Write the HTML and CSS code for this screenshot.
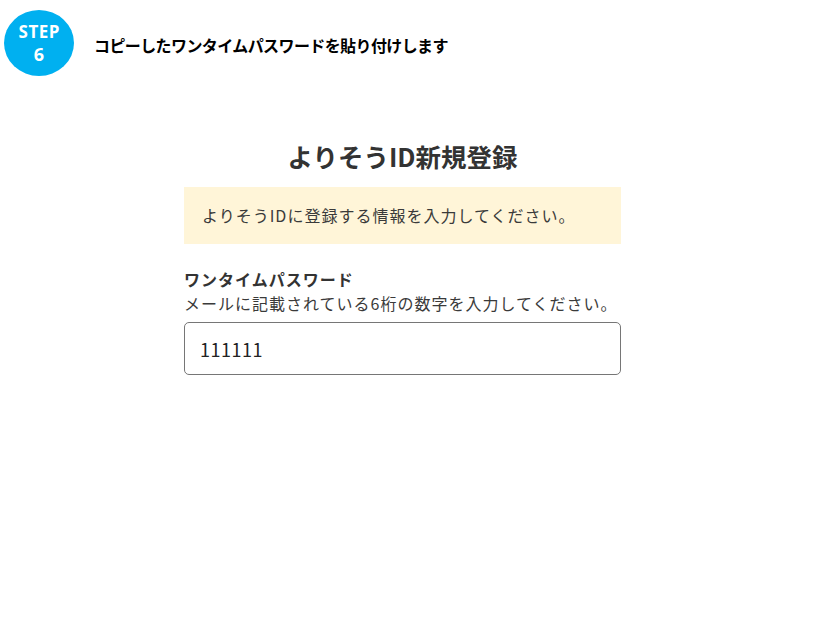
FILE: index.html
```html
<!DOCTYPE html>
<html lang="ja">
<head>
<meta charset="utf-8">
<title>STEP 6</title>
<link rel="stylesheet" href="styles.css">
</head>
<body>
<header class="step">
  <div class="step-badge"><span class="step-word">STEP</span><span class="step-num">6</span></div>
  <p class="step-text">コピーしたワンタイムパスワードを貼り付けします</p>
</header>
<main class="panel">
  <h1 class="title">よりそうID新規登録</h1>
  <div class="notice">よりそうIDに登録する情報を入力してください。</div>
  <div class="field">
    <label class="field-label" for="otp">ワンタイムパスワード</label>
    <p class="field-help">メールに記載されている6桁の数字を入力してください。</p>
    <input class="field-input" id="otp" type="text" value="111111">
  </div>
</main>
</body>
</html>
```

FILE: styles.css
```css
* { box-sizing: border-box; }
body {
  margin: 0;
  background: #fff;
  font-family: "Noto Sans CJK JP", "Noto Sans", sans-serif;
  color: #333;
}
.step {
  display: flex;
  align-items: center;
  gap: 20px;
  padding: 10px 0 0 4px;
}
.step-badge {
  width: 70px;
  height: 66px;
  border-radius: 50%;
  background: #00b0f0;
  color: #fff;
  display: flex;
  flex-direction: column;
  align-items: center;
  justify-content: center;
  font-family: "Open Sans", "Noto Sans", sans-serif;
  font-weight: 700;
  line-height: 22px;
}
.step-word { font-size: 17px; letter-spacing: 0.5px; padding-left: 0.5px; }
.step-num { font-size: 18px; }
.step-text {
  margin: 0;
  padding-top: 4px;
  font-size: 16px;
  font-weight: 700;
  letter-spacing: -0.6px;
  color: #000;
}
.panel {
  width: 437px;
  margin: 61px 0 0 184px;
}
.title {
  margin: 0;
  text-align: center;
  font-size: 25.5px;
  line-height: 38px;
  font-weight: 700;
  color: #333;
}
.notice {
  margin-top: 12px;
  background: #fff5d8;
  padding: 16px 18px;
  font-size: 16px;
  line-height: 25px;
  letter-spacing: 1px;
  color: #3a3a3a;
}
.field { margin-top: 23px; }
.field-label {
  display: block;
  font-size: 16px;
  line-height: 24px;
  font-weight: 700;
  letter-spacing: 1px;
  color: #333;
}
.field-help {
  margin: 0;
  font-size: 16px;
  line-height: 24px;
  letter-spacing: 1px;
  color: #3a3a3a;
}
.field-input {
  display: block;
  width: 100%;
  height: 53px;
  margin-top: 7px;
  padding: 0 15px;
  border: 1px solid #767676;
  border-radius: 5px;
  font-family: "Noto Sans CJK JP", "Noto Sans", sans-serif;
  font-size: 18px;
  letter-spacing: 0.5px;
  color: #222;
  background: #fff;
  outline: none;
}
```
